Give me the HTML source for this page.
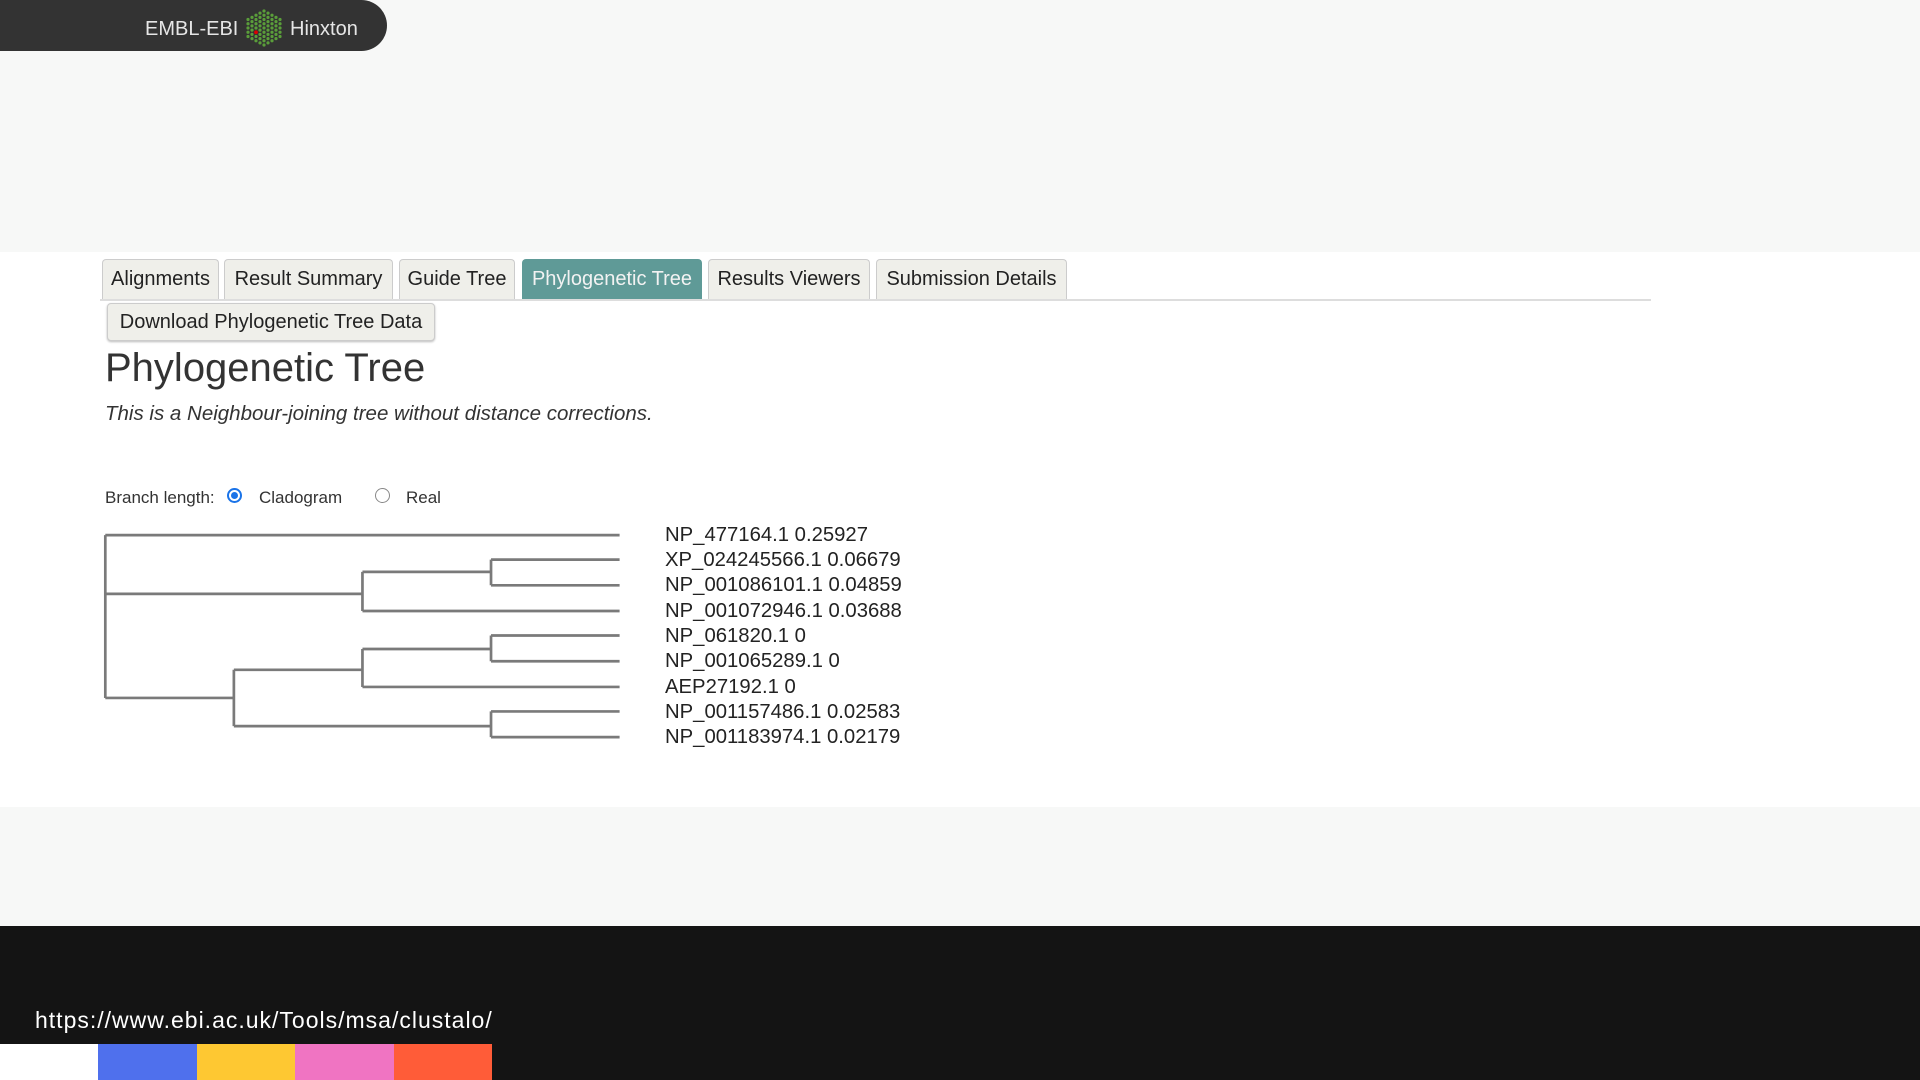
<!DOCTYPE html>
<html><head><meta charset="utf-8"><style>
*{margin:0;padding:0;box-sizing:border-box}
body{width:1920px;height:1080px;position:relative;background:#f7f8f7;font-family:"Liberation Sans",sans-serif;overflow:hidden}
.hdr{position:absolute;left:0;top:0;width:387px;height:51px;background:#333;border-radius:0 26px 26px 0}
.hdr span{position:absolute;top:18px;font-size:20px;color:#e6e6e6}
.main{position:absolute;left:0;top:252px;width:1920px;height:555px;background:#fff}
.foot{position:absolute;left:0;top:926px;width:1920px;height:154px;background:#141414}
.url{position:absolute;left:35px;top:1007px;font-size:23px;color:#fff;letter-spacing:1px}
.bar{position:absolute;top:1044px;height:36px}
.tab{position:absolute;top:259px;height:40px;background:#efefea;border:1px solid #ccc;border-bottom:none;border-radius:4px 4px 0 0;font-size:20px;color:#222;text-align:center;line-height:39px}
.tab.on{background:#5f9a97;color:#f2f2f2;border-color:#5f9a97}
.line{position:absolute;left:100px;top:299px;width:1551px;height:2px;background:#ddd}
.dl{position:absolute;left:107px;top:303px;width:328px;height:38px;background:#efefea;border:1px solid #ccc;border-radius:4px;font-size:20px;line-height:36px;text-align:center;color:#222;box-shadow:0 1px 2px #bbb}
h1{position:absolute;left:105px;top:346px;font-size:40px;font-weight:normal;color:#333}
.it{position:absolute;left:105px;top:402px;font-size:20.5px;font-style:italic;color:#333}
.bl{position:absolute;top:488px;font-size:17px;color:#333}
.rad{position:absolute;top:488px;width:15px;height:15px;border-radius:50%;border:1px solid #888;background:#fff}
.rad.on{border:2px solid #1a73e8}
.rad.on::after{content:"";position:absolute;left:2px;top:2px;width:7px;height:7px;border-radius:50%;background:#1a73e8}
.lbl{position:absolute;left:665px;font-size:20.3px;color:#222}
</style></head><body>
<div class="hdr">
<span style="left:145px">EMBL-EBI</span>
<svg style="position:absolute;left:243px;top:8px" width="42" height="42" viewBox="243 8 42 42" fill="#5a9e3a">
<g id="c4"><circle cx="264" cy="11" r="1.6"/><circle cx="264" cy="15.25" r="1.6"/><circle cx="264" cy="19.5" r="1.6"/><circle cx="264" cy="23.75" r="1.6"/><circle cx="264" cy="28" r="1.6"/><circle cx="264" cy="32.25" r="1.6"/><circle cx="264" cy="36.5" r="1.6"/><circle cx="264" cy="40.75" r="1.6"/><circle cx="264" cy="45" r="1.6"/></g>
<g><circle cx="260" cy="13.1" r="1.6"/><circle cx="260" cy="17.4" r="1.6"/><circle cx="260" cy="21.6" r="1.6"/><circle cx="260" cy="25.9" r="1.6"/><circle cx="260" cy="30.1" r="1.6"/><circle cx="260" cy="34.4" r="1.6"/><circle cx="260" cy="38.6" r="1.6"/><circle cx="260" cy="42.9" r="1.6"/></g>
<g><circle cx="268" cy="13.1" r="1.6"/><circle cx="268" cy="17.4" r="1.6"/><circle cx="268" cy="21.6" r="1.6"/><circle cx="268" cy="25.9" r="1.6"/><circle cx="268" cy="30.1" r="1.6"/><circle cx="268" cy="34.4" r="1.6"/><circle cx="268" cy="38.6" r="1.6"/><circle cx="268" cy="42.9" r="1.6"/></g>
<g><circle cx="256" cy="15.25" r="1.6"/><circle cx="256" cy="19.5" r="1.6"/><circle cx="256" cy="23.75" r="1.6"/><circle cx="256" cy="28" r="1.6"/><circle cx="256" cy="32.25" r="1.6"/><circle cx="256" cy="36.5" r="1.6"/><circle cx="256" cy="40.75" r="1.6"/></g>
<g><circle cx="272" cy="15.25" r="1.6"/><circle cx="272" cy="19.5" r="1.6"/><circle cx="272" cy="23.75" r="1.6"/><circle cx="272" cy="28" r="1.6"/><circle cx="272" cy="32.25" r="1.6"/><circle cx="272" cy="36.5" r="1.6"/><circle cx="272" cy="40.75" r="1.6"/></g>
<g><circle cx="252" cy="17.4" r="1.6"/><circle cx="252" cy="21.6" r="1.6"/><circle cx="252" cy="25.9" r="1.6"/><circle cx="252" cy="30.1" r="1.6"/><circle cx="252" cy="34.4" r="1.6"/><circle cx="252" cy="38.6" r="1.6"/></g>
<g><circle cx="276" cy="17.4" r="1.6"/><circle cx="276" cy="21.6" r="1.6"/><circle cx="276" cy="25.9" r="1.6"/><circle cx="276" cy="30.1" r="1.6"/><circle cx="276" cy="34.4" r="1.6"/><circle cx="276" cy="38.6" r="1.6"/></g>
<g><circle cx="248" cy="19.5" r="1.6"/><circle cx="248" cy="23.75" r="1.6"/><circle cx="248" cy="28" r="1.6"/><circle cx="248" cy="32.25" r="1.6"/><circle cx="248" cy="36.5" r="1.6"/></g>
<g><circle cx="280" cy="19.5" r="1.6"/><circle cx="280" cy="23.75" r="1.6"/><circle cx="280" cy="28" r="1.6"/><circle cx="280" cy="32.25" r="1.6"/><circle cx="280" cy="36.5" r="1.6"/></g>
<circle cx="256" cy="32.25" r="1.9" fill="#d00"/>
</svg>
<span style="left:290px">Hinxton</span>
</div>
<div class="main"></div>
<div class="foot"></div>
<div class="url">https://www.ebi.ac.uk/Tools/msa/clustalo/</div>
<div class="bar" style="left:0;width:98px;background:#fff"></div>
<div class="bar" style="left:98px;width:99px;background:#4f70ed"></div>
<div class="bar" style="left:197px;width:98px;background:#fec832"></div>
<div class="bar" style="left:295px;width:99px;background:#f074c2"></div>
<div class="bar" style="left:394px;width:98px;background:#ff5c38"></div>

<div class="tab" style="left:102px;width:117px">Alignments</div>
<div class="tab" style="left:224px;width:169px">Result Summary</div>
<div class="tab" style="left:399px;width:116px">Guide Tree</div>
<div class="tab on" style="left:522px;width:180px">Phylogenetic Tree</div>
<div class="tab" style="left:708px;width:162px">Results Viewers</div>
<div class="tab" style="left:876px;width:191px">Submission Details</div>
<div class="line"></div>
<div class="dl">Download Phylogenetic Tree Data</div>
<h1>Phylogenetic Tree</h1>
<div class="it">This is a Neighbour-joining tree without distance corrections.</div>
<div class="bl" style="left:105px">Branch length:</div>
<div class="rad on" style="left:227px"></div>
<div class="bl" style="left:259px">Cladogram</div>
<div class="rad" style="left:375px"></div>
<div class="bl" style="left:406px">Real</div>

<svg style="position:absolute;left:0;top:0" width="1920" height="1080">
<g transform="scale(1.2245)" stroke="#7a7a7a" stroke-width="2.2" fill="none">
<path d="M86 437H506 M86 437V570 M86 485H296 M296 467V499 M296 467H401 M401 457V478 M401 457H506 M401 478H506 M296 499H506
M86 570H191 M191 547V593 M191 547H296 M296 530V561 M296 530H401 M401 519V540 M401 519H506 M401 540H506 M296 561H506
M191 593H401 M401 581V602 M401 581H506 M401 602H506"/>
</g>
</svg>
<div class="lbl" style="top:524px">NP_477164.1 0.25927</div>
<div class="lbl" style="top:549px">XP_024245566.1 0.06679</div>
<div class="lbl" style="top:574px">NP_001086101.1 0.04859</div>
<div class="lbl" style="top:600px">NP_001072946.1 0.03688</div>
<div class="lbl" style="top:625px">NP_061820.1 0</div>
<div class="lbl" style="top:650px">NP_001065289.1 0</div>
<div class="lbl" style="top:676px">AEP27192.1 0</div>
<div class="lbl" style="top:701px">NP_001157486.1 0.02583</div>
<div class="lbl" style="top:726px">NP_001183974.1 0.02179</div>
</body></html>
